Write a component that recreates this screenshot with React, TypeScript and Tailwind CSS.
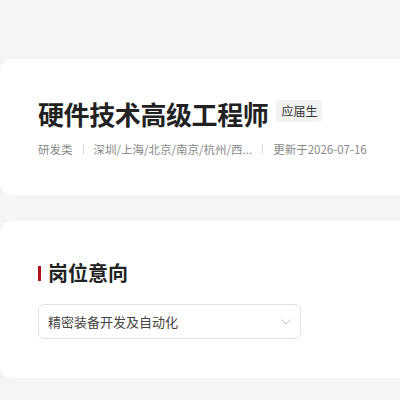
export default function App() {
  return (
    <div
      className="w-[400px] h-[400px] overflow-hidden bg-[#f5f5f5] pt-[59px]"
      style={{ fontFamily: '"Noto Sans CJK SC", "Noto Sans", sans-serif' }}
    >
      {/* Job header card */}
      <section className="h-[136px] bg-white rounded-l-[12px] pl-[38px] pt-[37px]">
        <div className="flex items-center">
          <h1 className="text-[26px] leading-[36px] font-bold text-[#222] tracking-[-0.4px]">
            硬件技术高级工程师
          </h1>
          <span className="ml-[8px] mb-[7px] h-[22px] px-[5px] flex items-center rounded-[4px] bg-[#f2f2f2] text-[12px] text-[#333]">
            应届生
          </span>
        </div>
        <div className="mt-[8px] flex items-center text-[11.5px] leading-[18px] text-[#888]">
          <span>研发类</span>
          <span className="mx-[10px] h-[10px] w-px bg-[#ddd]" />
          <span>深圳/上海/北京/南京/杭州/西...</span>
          <span className="mx-[10px] h-[10px] w-px bg-[#ddd]" />
          <span>更新于2026-07-16</span>
        </div>
      </section>

      {/* Intention card */}
      <section className="mt-[26px] h-[157px] bg-white rounded-l-[12px] pl-[38px] pt-[38px]">
        <div className="flex items-center">
          <span className="w-[3px] h-[15px] bg-[#b3121d]" />
          <h2 className="ml-[7px] text-[20px] leading-[28px] font-bold text-[#222]">岗位意向</h2>
        </div>
        <div className="mt-[17px] w-[263px] h-[35px] rounded-[6px] border border-[#e3e3e3] flex items-center justify-between pl-[9px] pr-[9px]">
          <span className="text-[13px] text-[#444]">精密装备开发及自动化</span>
          <svg width="10" height="6" viewBox="0 0 10 6" fill="none">
            <path d="M0.5 0.5 L5 5 L9.5 0.5" stroke="#c0c0c0" strokeWidth="1" />
          </svg>
        </div>
      </section>
    </div>
  )
}
